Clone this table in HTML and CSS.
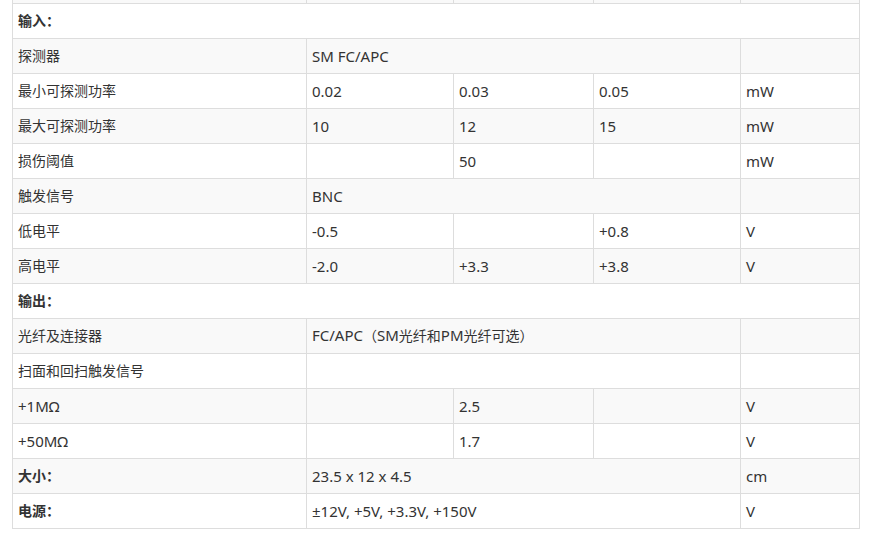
FILE: index.html
```html
<!DOCTYPE html>
<html lang="zh">
<head>
<meta charset="utf-8">
<link rel="stylesheet" href="styles.css">
</head>
<body>
<table class="spec">
  <colgroup>
    <col class="c1"><col class="c2"><col class="c3"><col class="c4"><col class="c5">
  </colgroup>
  <tbody>
    <tr><td>&nbsp;</td><td></td><td></td><td></td><td></td></tr>
    <tr><td colspan="5" class="b">输入：</td></tr>
    <tr><td>探测器</td><td colspan="3" class="en">SM FC/APC</td><td></td></tr>
    <tr><td>最小可探测功率</td><td class="en">0.02</td><td class="en">0.03</td><td class="en">0.05</td><td class="en">mW</td></tr>
    <tr><td>最大可探测功率</td><td class="en">10</td><td class="en">12</td><td class="en">15</td><td class="en">mW</td></tr>
    <tr><td>损伤阈值</td><td></td><td class="en">50</td><td></td><td class="en">mW</td></tr>
    <tr><td>触发信号</td><td colspan="3" class="en">BNC</td><td></td></tr>
    <tr><td>低电平</td><td class="en">-0.5</td><td></td><td class="en">+0.8</td><td class="en">V</td></tr>
    <tr><td>高电平</td><td class="en">-2.0</td><td class="en">+3.3</td><td class="en">+3.8</td><td class="en">V</td></tr>
    <tr><td colspan="5" class="b">输出：</td></tr>
    <tr><td>光纤及连接器</td><td colspan="3"><span class="en">FC/APC</span>（<span class="en">SM</span>光纤和<span class="en">PM</span>光纤可选）</td><td></td></tr>
    <tr><td>扫面和回扫触发信号</td><td colspan="3"></td><td></td></tr>
    <tr><td class="en">+1MΩ</td><td></td><td class="en">2.5</td><td></td><td class="en">V</td></tr>
    <tr><td class="en">+50MΩ</td><td></td><td class="en">1.7</td><td></td><td class="en">V</td></tr>
    <tr><td class="b">大小：</td><td colspan="3" class="en">23.5 x 12 x 4.5</td><td class="en">cm</td></tr>
    <tr><td class="b">电源：</td><td colspan="3" class="en">±12V, +5V, +3.3V, +150V</td><td class="en">V</td></tr>
  </tbody>
</table>
</body>
</html>
```
FILE: styles.css
```css
html, body {
  margin: 0;
  padding: 0;
  background: #fff;
}
body {
  font-family: "Segoe UI", "Noto Sans", "Noto Sans CJK SC", sans-serif;
  font-size: 14px;
  color: #333;
}
.spec {
  border-collapse: collapse;
  table-layout: fixed;
  width: 848px;
  margin: -32px 0 0 12px;
}
.c1 { width: 294px; }
.c2 { width: 147px; }
.c3 { width: 140px; }
.c4 { width: 147px; }
.c5 { width: 119px; }
.spec td {
  border: 1px solid #ddd;
  padding: 8px 5px;
  line-height: 18px;
  height: 18px;
  vertical-align: middle;
  text-align: left;
}
.spec tr:nth-child(odd) td { background: #f9f9f9; }
.spec tr:nth-child(even) td { background: #fff; }
.spec td.b { font-weight: bold; }
.spec .en { font-size: 15px; }
.spec span.en { line-height: 14px; }
```
